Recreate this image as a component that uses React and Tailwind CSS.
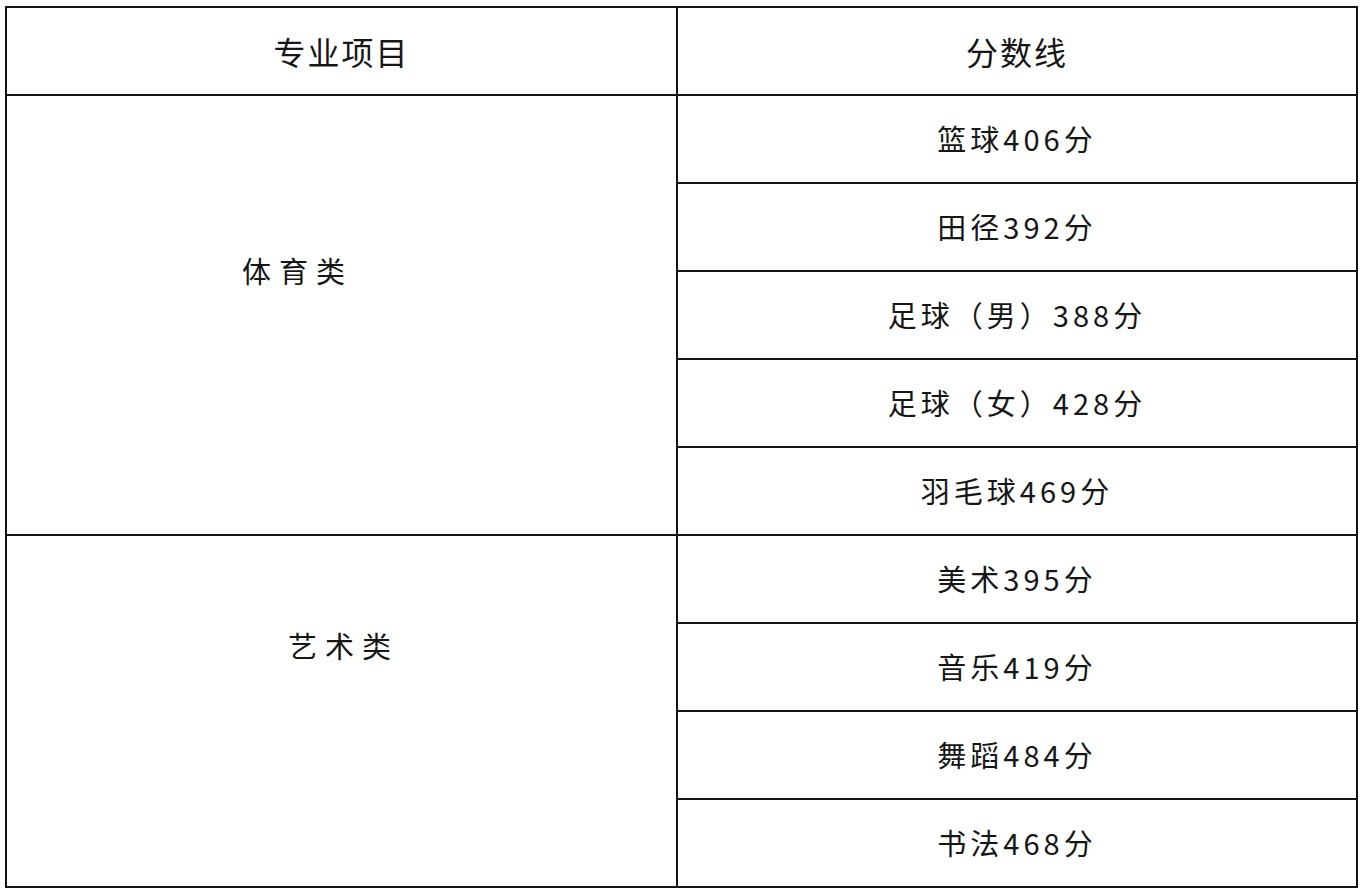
const sports = ["篮球406分", "田径392分", "足球（男）388分", "足球（女）428分", "羽毛球469分"];
const arts = ["美术395分", "音乐419分", "舞蹈484分", "书法468分"];

const cell = "border-2 border-[#141414] h-[88px] text-center align-middle text-[29px] tracking-[4px]";

const App = () => {
    return (
        <main className="w-full h-screen bg-white pl-[5px] pt-[6px] text-[#161616]" style={{ fontFamily: '"Noto Sans CJK SC", "Noto Sans", sans-serif' }}>
            <table className="w-[1353px] border-collapse border-2 border-[#141414]">
                <tbody>
                    {/* Header */}
                    <tr>
                        <th className="border-2 border-[#141414] w-[671px] h-[88px] text-[32px] font-normal tracking-[2px]">专业项目</th>
                        <th className="border-2 border-[#141414] h-[88px] text-[32px] font-normal tracking-[2px]">分数线</th>
                    </tr>
                    {sports.map((s, i) => (
                        <tr key={s}>
                            {i === 0 && (
                                <td rowSpan={sports.length} className="border-2 border-[#141414] align-top">
                                    <div className="pt-[153px] pr-[88px] text-center text-[29px] tracking-[8px]">体育类</div>
                                </td>
                            )}
                            <td className={cell}>{s}</td>
                        </tr>
                    ))}
                    {arts.map((s, i) => (
                        <tr key={s}>
                            {i === 0 && (
                                <td rowSpan={arts.length} className="border-2 border-[#141414] align-top">
                                    <div className="pt-[88px] pl-[4px] text-center text-[29px] tracking-[8px]">艺术类</div>
                                </td>
                            )}
                            <td className={cell}>{s}</td>
                        </tr>
                    ))}
                </tbody>
            </table>
        </main>
    );
};

export default App;
